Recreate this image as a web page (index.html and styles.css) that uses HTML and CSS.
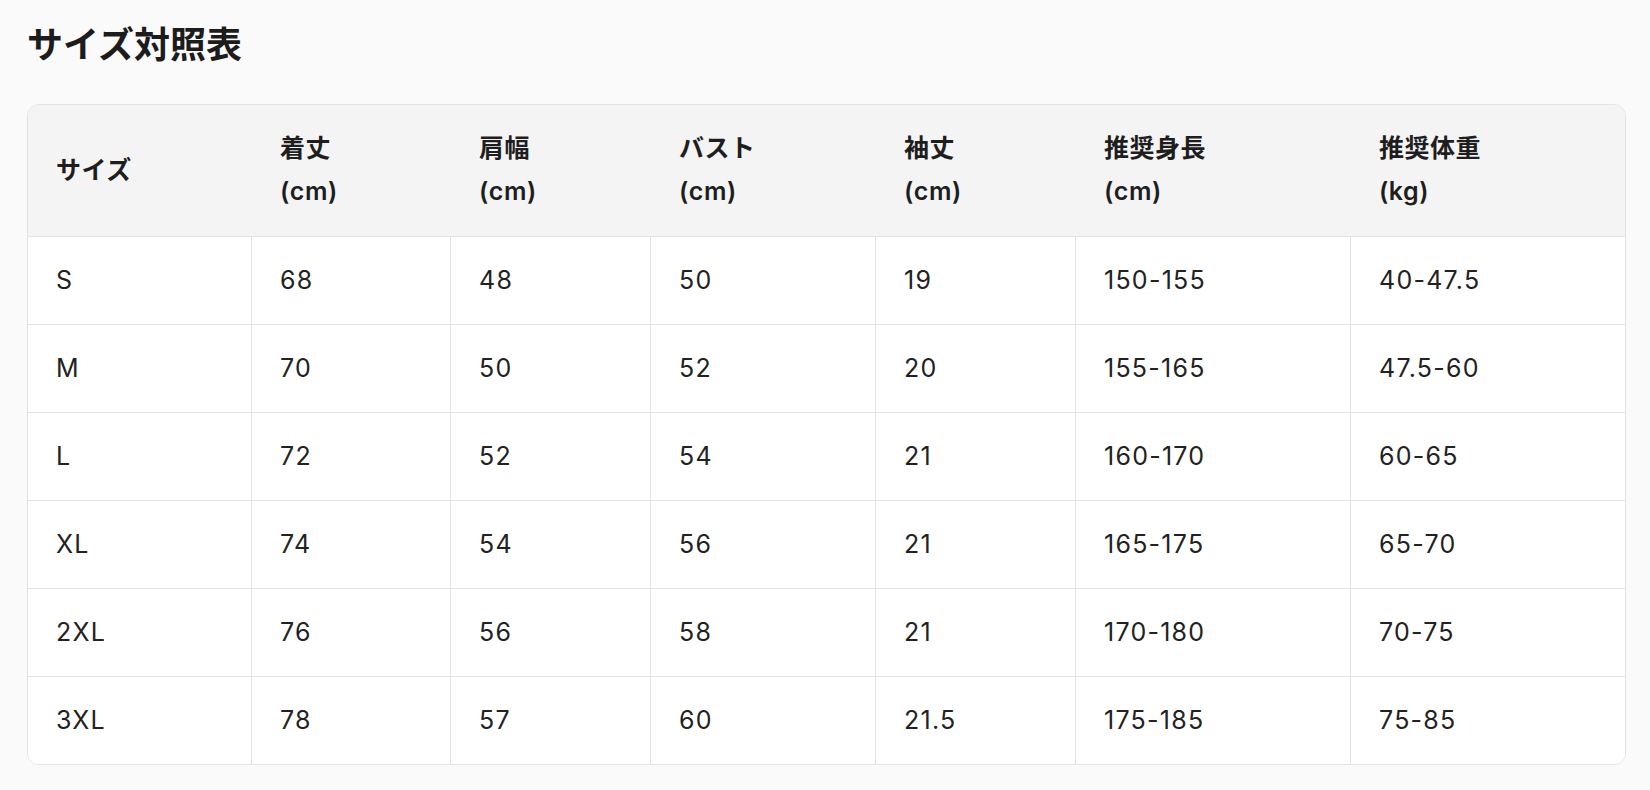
FILE: index.html
```html
<!DOCTYPE html>
<html lang="ja">
<head>
<meta charset="utf-8">
<title>サイズ対照表</title>
<link rel="stylesheet" href="styles.css">
</head>
<body>
<main class="page">
  <h1 class="title">サイズ対照表</h1>
  <div class="card">
    <table class="size-table">
      <colgroup>
        <col class="c1"><col class="c2"><col class="c3"><col class="c4"><col class="c5"><col class="c6"><col class="c7">
      </colgroup>
      <thead>
        <tr>
          <th>サイズ</th>
          <th>着丈<br>(cm)</th>
          <th>肩幅<br>(cm)</th>
          <th>バスト<br>(cm)</th>
          <th>袖丈<br>(cm)</th>
          <th>推奨身長<br>(cm)</th>
          <th>推奨体重<br>(kg)</th>
        </tr>
      </thead>
      <tbody>
        <tr><td>S</td><td>68</td><td>48</td><td>50</td><td>19</td><td>150-155</td><td>40-47.5</td></tr>
        <tr><td>M</td><td>70</td><td>50</td><td>52</td><td>20</td><td>155-165</td><td>47.5-60</td></tr>
        <tr><td>L</td><td>72</td><td>52</td><td>54</td><td>21</td><td>160-170</td><td>60-65</td></tr>
        <tr><td>XL</td><td>74</td><td>54</td><td>56</td><td>21</td><td>165-175</td><td>65-70</td></tr>
        <tr><td>2XL</td><td>76</td><td>56</td><td>58</td><td>21</td><td>170-180</td><td>70-75</td></tr>
        <tr><td>3XL</td><td>78</td><td>57</td><td>60</td><td>21.5</td><td>175-185</td><td>75-85</td></tr>
      </tbody>
    </table>
  </div>
</main>
</body>
</html>
```

FILE: styles.css
```css
html, body {
  margin: 0;
  padding: 0;
  background: #fafafa;
}

body {
  font-family: "Inter", "Noto Sans CJK JP", sans-serif;
  color: #1f1f1f;
}

.page {
  padding: 24px 24px 0 27px;
}

.title {
  margin: 0 0 37px 0;
  font-size: 36px;
  line-height: 43px;
  font-weight: 600;
  color: #1c1c1c;
}

.card {
  border: 1px solid #e3e3e3;
  border-radius: 12px;
  overflow: hidden;
  background: #ffffff;
}

.size-table {
  width: 100%;
  table-layout: fixed;
  border-collapse: separate;
  border-spacing: 0;
  font-size: 25px;
  line-height: 43px;
  letter-spacing: 0.05em;
}

.c1 { width: 224px; }
.c2 { width: 199px; }
.c3 { width: 200px; }
.c4 { width: 225px; }
.c5 { width: 200px; }
.c6 { width: 275px; }
.c7 { width: 274px; }

.size-table th,
.size-table td {
  box-sizing: border-box;
  text-align: left;
  vertical-align: middle;
  padding: 22px 27px 22px 28px;
}

.size-table th {
  background: #f4f4f4;
  font-weight: 600;
  letter-spacing: 0.02em;
  color: #1e1e1e;
  padding-top: 22px;
  padding-bottom: 23px;
  border-bottom: 1px solid #e3e3e3;
}

.size-table td {
  background: #ffffff;
  font-weight: 400;
  color: #222222;
  border-right: 1px solid #e3e3e3;
  border-bottom: 1px solid #e3e3e3;
}

.size-table td:last-child {
  border-right: none;
}

.size-table tbody tr:last-child td {
  border-bottom: none;
}
```
